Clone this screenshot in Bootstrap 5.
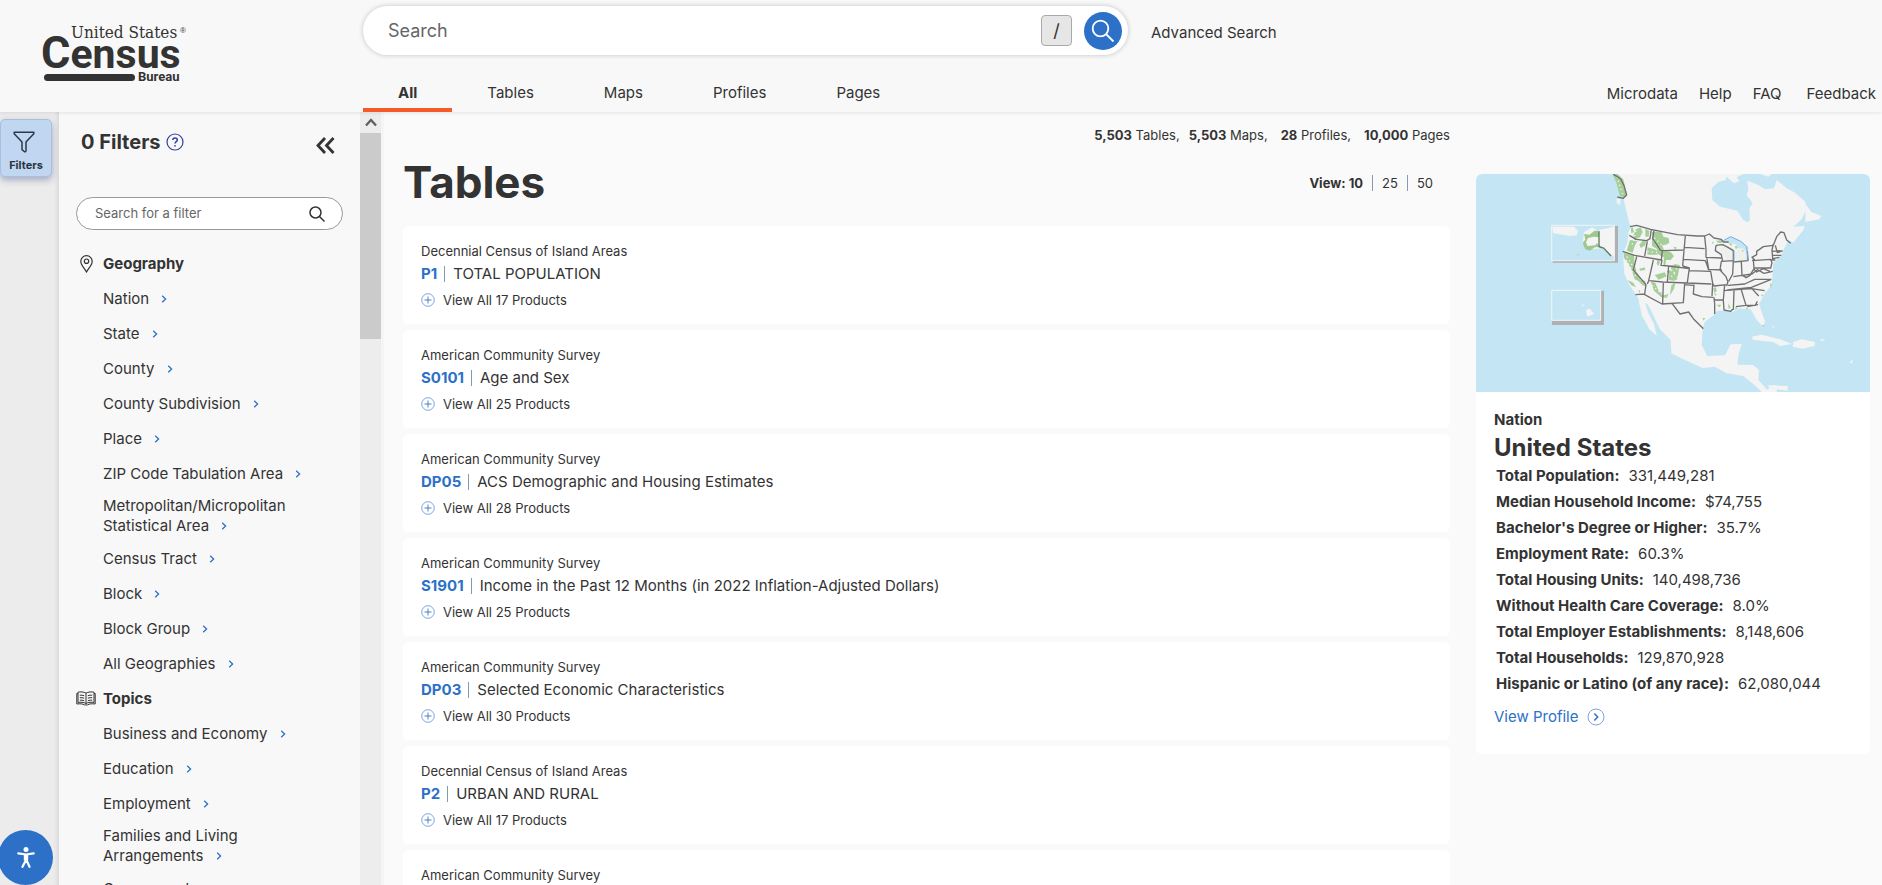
<!DOCTYPE html>
<html lang="en">
<head>
<meta charset="utf-8">
<meta name="viewport" content="width=device-width, initial-scale=1">
<title>Explore Census Data</title>
<link href="https://cdn.jsdelivr.net/npm/bootstrap@5.3.0/dist/css/bootstrap.min.css" rel="stylesheet">
<style>
  :root { --ink:#333; --blue:#2c71c7; --orange:#f55a28; }
  body { font-family:Inter,"Liberation Sans",sans-serif; font-size:15px; color:var(--ink); background:#fafafa; }
  a { color:inherit; text-decoration:none; }
  svg { display:block; flex:none; }
  .site-head { background:#f8f8f8; height:112px; box-shadow:0 1px 4px rgba(0,0,0,.09); z-index:2; }
  .brand { width:363px; padding:20px 0 0 40px; }
  .search-area { padding-top:6px; flex:1 1 765px; max-width:765px; }
  .site-search { height:49px; border-radius:25px; background:#fff; box-shadow:0 0 5px rgba(0,0,0,.22); padding:0 6px 0 25px; gap:12px; }
  .site-search input { font-size:18px; }
  .plain-input { border:0; outline:0; background:none; min-width:0; color:var(--ink); padding:0; }
  .plain-input::placeholder { color:#666; opacity:1; }
  .slash-key { width:31px; height:31px; border:1px solid #aaa; border-radius:4px; background:#e6e6e6; color:var(--ink); font-size:18px; padding:0; }
  .go { width:38px; height:38px; border:0; border-radius:50%; background:var(--blue); padding:0; }
  .tabs { height:57px; }
  .tabs a { padding:26px 35px 0; line-height:24px; border-bottom:4px solid transparent; }
  .tabs a.active { font-weight:700; border-color:var(--orange); }
  .advanced { padding:21px 0 0 23px; line-height:24px; }
  .utility { padding:0 6px 6px 0; gap:21px; line-height:24px; }
  .utility a:last-child { padding-left:4px; }
  .rail { width:59px; background:#ececec; box-shadow:inset -5px 0 5px -4px rgba(0,0,0,.12); padding-top:7px; }
  .rail-btn { width:52px; height:58px; background:#c0d6f1; border:1px solid #a9bfdf; border-radius:5px; box-shadow:0 3px 7px rgba(30,50,110,.35); font-size:11px; font-weight:700; color:#2b3342; padding:11px 0 0; line-height:12px; gap:6px; }
  .filters { width:301px; background:#f8f8f8; }
  .filters-head { padding:17px 25px 0 22px; height:85px; gap:6px; }
  .filters-head h2 { font-size:20px; line-height:26px; font-weight:700; margin:0; }
  .filter-search { height:33px; border:1px solid #999; border-radius:17px; background:#fff; margin:0 17px 16px; padding:1px 17px 0 18px; }
  .filter-search input { font-size:13px; }
  .filter-list { padding:0 17px; line-height:20px; }
  .filter-list li { min-height:35px; padding:5px 0 5px 27px; }
  .filter-list li.group-title { padding:5px 0; font-weight:700; }
  .group-icon { width:27px; }
  .chev { display:inline-block; margin-left:8px; vertical-align:1px; }
  .bar { width:24px; background:#ededed; border-right:3px solid #f5f5f5; }
  .bar-cap { height:21px; }
  .bar-thumb { height:206px; background:#cbcbcb; }
  .results { padding:0 0 0 19px; }
  .counts { font-size:13px; line-height:20px; padding-top:13px; gap:9px; }
  .results-head { padding:10px 0 16px; }
  .results-head h1 { font-size:44px; line-height:55px; font-weight:700; margin:0; }
  .pager { font-size:13px; line-height:16px; padding-right:17px; }
  .pager span { padding:0 9px; border-left:1px solid #8a9ab0; }
  .pager b { padding-right:9px; }
  .pager span:last-child { padding-right:0; }
  .result { background:#fff; border-radius:6px; height:98px; padding:16px 18px; flex:none; }
  .survey { font-size:13px; line-height:18px; }
  .result h3 { font-size:15px; line-height:24px; font-weight:400; margin:2px 0 4px; }
  .code-id { color:var(--blue); font-weight:700; }
  .result h3 i { width:1px; height:16px; background:#7d9cb8; margin:0 8px 0 7px; }
  .more { border:0; background:none; padding:0; font-size:13px; line-height:20px; color:var(--ink); gap:8px; }
  .side { flex:0 0 432px; padding:62px 12px 0 26px; }
  .profile { background:#fff; border-radius:6px; overflow:hidden; padding-bottom:25px; }
  .profile-body { padding:16px 18px 0; }
  .profile-body h2 { font-size:24px; line-height:31px; font-weight:700; margin:0; }
  .kind { line-height:24px; font-weight:700; }
  .facts { padding:0 0 0 2px; margin:0; line-height:26px; }
  .facts dt { font-weight:700; }
  .facts dd { margin:0 0 0 9px; }
  .view-profile { color:var(--blue); line-height:24px; gap:8px; margin-top:8px; }
  .a11y { width:55px; height:55px; border:0; border-radius:50%; background:var(--blue); left:-2px; bottom:0; padding:0; z-index:3; }
</style>
</head>
<body class="vh-100 d-flex flex-column overflow-hidden">
<svg width="0" height="0" class="position-absolute" aria-hidden="true">
  <symbol id="i-chev" viewBox="0 0 6 8"><path d="M1.2.8 4.6 4 1.2 7.2" fill="none" stroke="#2c71c7" stroke-width="1.3"/></symbol>
  <symbol id="i-plus" viewBox="0 0 14 14"><circle cx="7" cy="7" r="6.3" fill="none" stroke="#7fa3dc" stroke-width="1"/><path d="M7 3.5v7M3.5 7h7" stroke="#4a7fd0" stroke-width="1"/></symbol>
</svg>

<header class="site-head d-flex position-relative flex-shrink-0">
  <a class="brand flex-shrink-0" href="#" aria-label="United States Census Bureau">
    <svg width="150" height="64" viewBox="40 20 150 64" fill="#333">
      <text x="71" y="38" font-family="DejaVu Serif Condensed, DejaVu Serif, serif" font-size="17">United States</text>
      <text x="180" y="33" font-family="Liberation Sans, sans-serif" font-size="8">®</text>
      <text x="41" y="68" font-family="Roboto, sans-serif" font-weight="700" font-size="41"><tspan font-size="45">C</tspan>ensus</text>
      <rect x="44" y="74" width="91" height="7" rx="3.5"/>
      <text x="138" y="81" font-family="Roboto, sans-serif" font-weight="700" font-size="13">Bureau</text>
    </svg>
  </a>
  <div class="search-area">
    <form class="site-search d-flex align-items-center">
      <input class="plain-input flex-grow-1" type="text" placeholder="Search" aria-label="Search">
      <button class="slash-key" type="button">/</button>
      <button class="go d-flex align-items-center justify-content-center" type="button" aria-label="Search">
        <svg width="24" height="24" viewBox="0 0 24 24" fill="none" stroke="#fff" stroke-width="1.8"><circle cx="9.5" cy="9.5" r="7.8"/><path d="m15 15 7.5 7.5"/></svg>
      </button>
    </form>
    <nav class="tabs d-flex">
      <a class="active" href="#">All</a><a href="#">Tables</a><a href="#">Maps</a><a href="#">Profiles</a><a href="#">Pages</a>
    </nav>
  </div>
  <a class="advanced" href="#">Advanced Search</a>
  <nav class="utility d-flex ms-auto align-items-end">
    <a href="#">Microdata</a><a href="#">Help</a><a href="#">FAQ</a><a href="#">Feedback</a>
  </nav>
</header>

<div class="d-flex flex-grow-1 overflow-hidden">
  <div class="rail flex-shrink-0">
    <button class="rail-btn d-flex flex-column align-items-center" type="button">
      <svg width="22" height="22" viewBox="0 0 22 22" class="me-1" fill="none" stroke="#2b3a4a" stroke-width="1.5"><path d="M1.200 1.200h19.600v1.600L13 11v8.500c0 1.500-1 1.500-2 .8l-2-1.700V11L1.200 2.800z" stroke-linejoin="round"/></svg>
      Filters
    </button>
  </div>

  <aside class="filters flex-shrink-0 overflow-hidden">
    <div class="filters-head d-flex align-items-start">
      <h2>0 Filters</h2>
      <svg class="mt-1" width="18" height="18" viewBox="0 0 18 18"><circle cx="9" cy="9" r="8" fill="none" stroke="#3440a0" stroke-width="1.2"/><path d="M6.800 6.900c0-2.700 4.500-2.600 4.500 0C11.300 8.600 9 8.600 9 10.600" fill="none" stroke="#3440a0" stroke-width="1.5"/><circle cx="9" cy="12.800" r=".9" fill="#3440a0"/></svg>
      <button class="border-0 bg-transparent p-0 ms-auto mt-2" type="button" aria-label="Collapse"><svg width="19" height="17" viewBox="0 0 19 17" fill="none" stroke="#333" stroke-width="2.800"><path d="m9 1-7 7.500L9 16M17.500 1l-7 7.500 7 7.500"/></svg></button>
    </div>
    <div class="filter-search d-flex align-items-center">
      <input class="plain-input flex-grow-1" type="text" placeholder="Search for a filter" aria-label="Search for a filter">
      <svg width="16" height="16" viewBox="0 0 16 16" fill="none" stroke="#333" stroke-width="1.500"><circle cx="6.500" cy="6.500" r="5.500"/><path d="m10.500 10.500 5 5"/></svg>
    </div>
    <ul class="filter-list list-unstyled mb-0">
      <li class="group-title d-flex align-items-center"><span class="group-icon"><svg class="ms-1" width="13" height="18" viewBox="0 0 13 18" fill="none" stroke="#333" stroke-width="1.200"><path d="M6.500 17C4 12.500.8 9.800.8 6.400a5.700 5.700 0 0 1 11.400 0c0 3.400-3.200 6.100-5.700 10.600z"/><circle cx="6.500" cy="6.200" r="2.200"/></svg></span>Geography</li>
      <li class="d-flex align-items-center"><a href="#">Nation <svg class="chev" width="6" height="8"><use href="#i-chev"/></svg></a></li>
      <li class="d-flex align-items-center"><a href="#">State <svg class="chev" width="6" height="8"><use href="#i-chev"/></svg></a></li>
      <li class="d-flex align-items-center"><a href="#">County <svg class="chev" width="6" height="8"><use href="#i-chev"/></svg></a></li>
      <li class="d-flex align-items-center"><a href="#">County Subdivision <svg class="chev" width="6" height="8"><use href="#i-chev"/></svg></a></li>
      <li class="d-flex align-items-center"><a href="#">Place <svg class="chev" width="6" height="8"><use href="#i-chev"/></svg></a></li>
      <li class="d-flex align-items-center"><a href="#">ZIP Code Tabulation Area <svg class="chev" width="6" height="8"><use href="#i-chev"/></svg></a></li>
      <li class="d-flex align-items-center"><a href="#">Metropolitan/Micropolitan<br>Statistical Area <svg class="chev" width="6" height="8"><use href="#i-chev"/></svg></a></li>
      <li class="d-flex align-items-center"><a href="#">Census Tract <svg class="chev" width="6" height="8"><use href="#i-chev"/></svg></a></li>
      <li class="d-flex align-items-center"><a href="#">Block <svg class="chev" width="6" height="8"><use href="#i-chev"/></svg></a></li>
      <li class="d-flex align-items-center"><a href="#">Block Group <svg class="chev" width="6" height="8"><use href="#i-chev"/></svg></a></li>
      <li class="d-flex align-items-center"><a href="#">All Geographies <svg class="chev" width="6" height="8"><use href="#i-chev"/></svg></a></li>
      <li class="group-title d-flex align-items-center"><span class="group-icon"><svg width="20" height="15" viewBox="0 0 20 15" fill="none" stroke="#333" stroke-width="1"><path d="M10 2.200C8 .8 4 .6 2 1.200v10.300c2-.5 6-.4 8 1 2-1.400 6-1.500 8-1V1.200c-2-.6-6-.4-8 1zv10.300"/><path d="M2 2.500H.8V13c3-.4 6-.3 7.700.9h3c1.700-1.200 4.700-1.300 7.700-.9V2.500H18M3.800 4.200c1.500-.2 3 0 4.400.5M3.800 6.700c1.500-.2 3 0 4.400.5M3.800 9.200c1.500-.2 3 0 4.400.5M16.200 4.200c-1.500-.2-3 0-4.400.5M16.200 6.700c-1.500-.2-3 0-4.400.5M16.200 9.200c-1.500-.2-3 0-4.400.5"/></svg></span>Topics</li>
      <li class="d-flex align-items-center"><a href="#">Business and Economy <svg class="chev" width="6" height="8"><use href="#i-chev"/></svg></a></li>
      <li class="d-flex align-items-center"><a href="#">Education <svg class="chev" width="6" height="8"><use href="#i-chev"/></svg></a></li>
      <li class="d-flex align-items-center"><a href="#">Employment <svg class="chev" width="6" height="8"><use href="#i-chev"/></svg></a></li>
      <li class="d-flex align-items-center"><a href="#">Families and Living<br>Arrangements <svg class="chev" width="6" height="8"><use href="#i-chev"/></svg></a></li>
      <li class="d-flex align-items-center"><a href="#">Government <svg class="chev" width="6" height="8"><use href="#i-chev"/></svg></a></li>
    </ul>
  </aside>

  <div class="bar flex-shrink-0" aria-hidden="true">
    <div class="bar-cap d-flex align-items-center justify-content-center"><svg width="12" height="9" viewBox="0 0 12 9" fill="none" stroke="#606060" stroke-width="2.400"><path d="m1 7.500 5-5.500 5 5.500"/></svg></div>
    <div class="bar-thumb"></div>
  </div>

  <main class="results flex-grow-1 d-flex flex-column">
    <div class="counts d-flex justify-content-end">
      <span><b>5,503</b> Tables,</span><span><b>5,503</b> Maps,</span><span class="ms-1"><b>28</b> Profiles,</span><span class="ms-1"><b>10,000</b> Pages</span>
    </div>
    <div class="results-head d-flex justify-content-between align-items-center">
      <h1>Tables</h1>
      <div class="pager d-flex"><b>View: 10</b><span><a href="#">25</a></span><span><a href="#">50</a></span></div>
    </div>
    <div class="d-flex flex-column" style="gap:6px">
      <article class="result"><div class="survey">Decennial Census of Island Areas</div><h3 class="d-flex align-items-center"><a class="code-id" href="#">P1</a><i></i>TOTAL POPULATION</h3><button class="more d-flex align-items-center" type="button"><svg width="14" height="14"><use href="#i-plus"/></svg>View All 17 Products</button></article>
      <article class="result"><div class="survey">American Community Survey</div><h3 class="d-flex align-items-center"><a class="code-id" href="#">S0101</a><i></i>Age and Sex</h3><button class="more d-flex align-items-center" type="button"><svg width="14" height="14"><use href="#i-plus"/></svg>View All 25 Products</button></article>
      <article class="result"><div class="survey">American Community Survey</div><h3 class="d-flex align-items-center"><a class="code-id" href="#">DP05</a><i></i>ACS Demographic and Housing Estimates</h3><button class="more d-flex align-items-center" type="button"><svg width="14" height="14"><use href="#i-plus"/></svg>View All 28 Products</button></article>
      <article class="result"><div class="survey">American Community Survey</div><h3 class="d-flex align-items-center"><a class="code-id" href="#">S1901</a><i></i>Income in the Past 12 Months (in 2022 Inflation-Adjusted Dollars)</h3><button class="more d-flex align-items-center" type="button"><svg width="14" height="14"><use href="#i-plus"/></svg>View All 25 Products</button></article>
      <article class="result"><div class="survey">American Community Survey</div><h3 class="d-flex align-items-center"><a class="code-id" href="#">DP03</a><i></i>Selected Economic Characteristics</h3><button class="more d-flex align-items-center" type="button"><svg width="14" height="14"><use href="#i-plus"/></svg>View All 30 Products</button></article>
      <article class="result"><div class="survey">Decennial Census of Island Areas</div><h3 class="d-flex align-items-center"><a class="code-id" href="#">P2</a><i></i>URBAN AND RURAL</h3><button class="more d-flex align-items-center" type="button"><svg width="14" height="14"><use href="#i-plus"/></svg>View All 17 Products</button></article>
      <article class="result"><div class="survey">American Community Survey</div></article>
    </div>
  </main>

  <aside class="side">
    <section class="profile">
      <svg class="w-100" viewBox="48 342 1182 654" role="img" aria-label="Map of the United States">
        <path fill="#c4e6f4" d="M48 342h1182v654H48z"/>
        <g fill="#f4f4f4">
          <path d="M460 342 478 345 492 370 500 405 490 415 500 455 508 490 512 498 505 520 503 545 492 575 490 600 493 640 505 670 525 700 535 715 540 740 545 765 568 808 590 827 582 792 565 760 555 728 562 732 575 755 600 808 632 840 634 880 670 898 728 924 765 920 800 940 850 948 880 972 905 996H950V975L932 978 922 990 895 960 897 930 880 915 832 914 835 885 845 852 812 853 795 886 742 888 725 855 728 805 735 785 765 762 770 752 800 752 820 755 835 745 872 748 890 780 910 802 915 785 897 732 915 700 935 675 938 640 940 610 962 588 968 575 985 540 1000 548 1030 510 1034 498 1000 500 985 512 1000 500 1025 478 1038 450 1036 425 1005 398 980 385 950 360 942 385 915 388 895 375 862 362 865 390 860 405 878 430 868 445 870 480 862 487 850 480 832 452 780 440 757 420 755 385 775 366 797 360 800 342z"/>
          <path d="m1036 432 18 24 30 12-6 10-42 8zM790 342l60 0-20 10 8 12-16 6zM875 830l30-6 55 14 35 14-35 6-20-12-60-6zM1000 846l25-8 40 8-2 12-35 8-30-6zM1168 908l12-10-4 12zM1080 838l16 0-10 6zM922 976l62 2-2 14-30-4-10 8zM470 416l12 0-2 20-10-8zM900 342l35 0-10 8zM936 795l8 6-4 3z"/>
        </g>
        <path fill="#c4e6f4" d="m788 545 25-15 30 14 22 18-4 40-14-6-12 10-8-12 10-28-12-14-20-4z"/>
        <path fill="#eef0ec" d="m790 555 24 4 10 12-2 34-20-2-24-34zM832 565l18 0 10 14-2 24-26 3-8-10z"/>
        <g fill="#a6ce99">
          <path d="M458 342h14l18 16 10 44-6 10-14-3-10-38z"/>
          <path d="m528 508 14-6 6 14-8 16-16 8-4-14zM512 504l6-2 4 14-8 4zM550 540l8 0-2 16-14 8-4-10zM510 540l22 4-8 14-6 20-18-6zM556 506l12 6-2 18-10 0zM492 578l30 8 2 30 8 24 8 16 16 8 2 16-10-4-14-14-10-4-10-30-12-22-10-12zM576 516l28-2 6 16 16 4 2 14-10 6-12 2 6 14 20 6 10 12-10 12-14 0-2 20-6-4 2-24-16-8-6-18-14-8zM562 562l22 6 18 10-12 6-28 0z"/>
          <path d="m538 626 16-4 2 8-16 2zM592 600l8 4-4 14-6-6zM584 645l30-8 6 12-24 10zM632 618l14-6 14 4-4 18-4 24-10 4-16-2 2-18-8-8 14-4zM572 664l14 4 10 24 16 14 14-4-6 12-16-2-22-20zM634 676l12-8-4 18-12 20zM502 660l18 8 8 14-14-6zM535 690l6 2-2 8zM640 560l10 2-4 8zM620 540l6-2-2 6z"/>
          <path d="m760 684 8-2 2 12-8 4zM762 700l8 2-4 6zM770 734l14 0-6 8zM756 545l6 2-4 6zM768 542l22-2-6 10-10-2zM805 548l12 4-4 6zM824 558l10 2-6 8zM846 570l6 2-6 4zM728 774l8 0-6 8zM903 704l8 0-4 6zM930 668l6 6-4 10zM850 650l12 2-4 6zM905 794l8 2-2 6zM826 740l6 4-6 6zM858 742l8 2-6 4zM804 730l8 12-6 6z"/>
        </g>
        <path fill="none" stroke="#f1f3ee" stroke-width="4" stroke-dasharray="4 9" d="M500 590l50 78M498 600l30 50M574 524l50 50M580 540l30 44M528 512l-14 50M634 630l20 24M634 650l20-30M576 676l40 36M562 574l34 4M474 362l14 40"/>
        <g fill="none" stroke="#707070" stroke-width="4" stroke-linejoin="round">
          <path d="m460 343 14 8 8 6 10 20 8 28-10 10-18-4M510 500l20-4 42 12 80 16 60 4 22 0 14-6 14 12 22 4 6 8 16 0M508 526l20 12 32 4 10-6 4-28M582 512l-4 24 14 20 10 16 8 0M562 544l-8 44M488 574l36 12 80 14 3-30M530 590l-10 40 38 44-4 28-28 2M580 600l-14 62-4 10M568 662l40 4 146 6M608 572l66-2M676 526l-8 92M606 600l-3 16 24 2 60 8M626 618l-4 48M610 668l-2 62M554 704l52 28 64-4 4-58M674 562l60 4M670 598l66 4 4 10 6 18M734 530l4 38 0 24 46 2M668 618l20 6-6 44M686 632l66 2 6 36-2 38M702 674l-2 28 26 8 34 2M672 674l28 2M636 730l24 32 26-6 14 20 28 28 2 2M762 712l2 20 0 30M740 592l6 36 40 2M768 556l-2 16 18 12 4 20M768 556l20-2 16 8 16 10 0 30-36 2-4 26 18 20 6 16M820 602l-2 40-12 22M758 670l4 8 38-4M794 674l-4 46 2 30 20 4 6-6M764 720l26 0M802 690l72-8 60-24M820 606l44-4-2-28M844 606l2 40M820 650l26-4 14 6 10-6 12-20-2-28M846 646l30-4 18-14M876 602l56-4 4 10-4 16-52 0M790 692l84-6 40 6M822 692l-2 58M844 690l14 46-30 4M876 686l20 22M862 740l32-6M858 736l28 0 6-12M804 676l50-4 30-14 50 0M882 628l8 8 20-10 20 8M894 630l18 10 26-6M884 600l-8-8 14-8 0-10 20-14 30-4 10-26 12-14 10 2 8 22 12 10M940 552l-4 18 2 26 20-4M946 556l6 22 16-6M936 574l26-2M936 586l28 0M932 600l14 0M804 664l-4 14"/>
        </g>
        <path fill="none" stroke="#75a9db" stroke-width="3" d="m790 542 22-12 30 14 18 16 4 40M822 572l0 34"/>
        <path fill="#aeb0b2" d="M278 498h196v110H278zM276 692h156v103H276z"/>
        <path fill="#c4e6f4" stroke="#f4f4f4" stroke-width="3" d="M275 496h188v106H275zM275 691h147v90H275z"/>
        <path fill="#f4f4f4" d="m276 500 66 0 12 12-4 14-20 2-50-8zM417 510l45-10v90l-44-32zM372 516l24-14 22 14 0 50-30 0-20-14zM378 750l12-4 12 16-20 8zM365 732l8 4-4 4z"/>
        <path fill="#9dc98f" d="m372 522 16 2 16-12 14 2-2 18-14-2-18 4-6 12 4 12 24-2 4-6 14 10-20 2-14 10-14-4-8-18 8-12zM348 586l12-4-4 4z"/>
        <path fill="none" stroke="#5f7a5f" stroke-width="4" d="M417 514v46l14 4 22 24"/>
      </svg>
      <div class="profile-body">
        <div class="kind">Nation</div>
        <h2>United States</h2>
        <dl class="facts">
          <div class="d-flex"><dt>Total Population:</dt><dd>331,449,281</dd></div>
          <div class="d-flex"><dt>Median Household Income:</dt><dd>$74,755</dd></div>
          <div class="d-flex"><dt>Bachelor's Degree or Higher:</dt><dd>35.7%</dd></div>
          <div class="d-flex"><dt>Employment Rate:</dt><dd>60.3%</dd></div>
          <div class="d-flex"><dt>Total Housing Units:</dt><dd>140,498,736</dd></div>
          <div class="d-flex"><dt>Without Health Care Coverage:</dt><dd>8.0%</dd></div>
          <div class="d-flex"><dt>Total Employer Establishments:</dt><dd>8,148,606</dd></div>
          <div class="d-flex"><dt>Total Households:</dt><dd>129,870,928</dd></div>
          <div class="d-flex"><dt>Hispanic or Latino (of any race):</dt><dd>62,080,044</dd></div>
        </dl>
        <a class="view-profile d-inline-flex align-items-center" href="#">View Profile
          <svg width="18" height="18" viewBox="0 0 18 18" fill="none" stroke="#7fa3dc"><circle cx="9" cy="9" r="8"/><path d="m7.300 5.500 3.400 3.500-3.400 3.500" stroke="#2c71c7" stroke-width="1.500"/></svg></a>
      </div>
    </section>
  </aside>
</div>

<button class="a11y position-fixed d-flex align-items-center justify-content-center" type="button" aria-label="Accessibility options">
  <svg width="18" height="21" viewBox="0 0 18 21"><circle cx="9" cy="2.500" r="2.500" fill="#fff"/><path d="M1.300 6.300 9 7.500l7.700-1.200M9 7.500v5M9 8v5l-3.500 6.800M9 12l3.500 7.800" fill="none" stroke="#fff" stroke-width="2.200" stroke-linecap="round"/><path d="M6.800 7.500h4.400v6H6.800z" fill="#fff"/></svg>
</button>
<script src="https://cdn.jsdelivr.net/npm/bootstrap@5.3.0/dist/js/bootstrap.bundle.min.js"></script>
</body>
</html>
